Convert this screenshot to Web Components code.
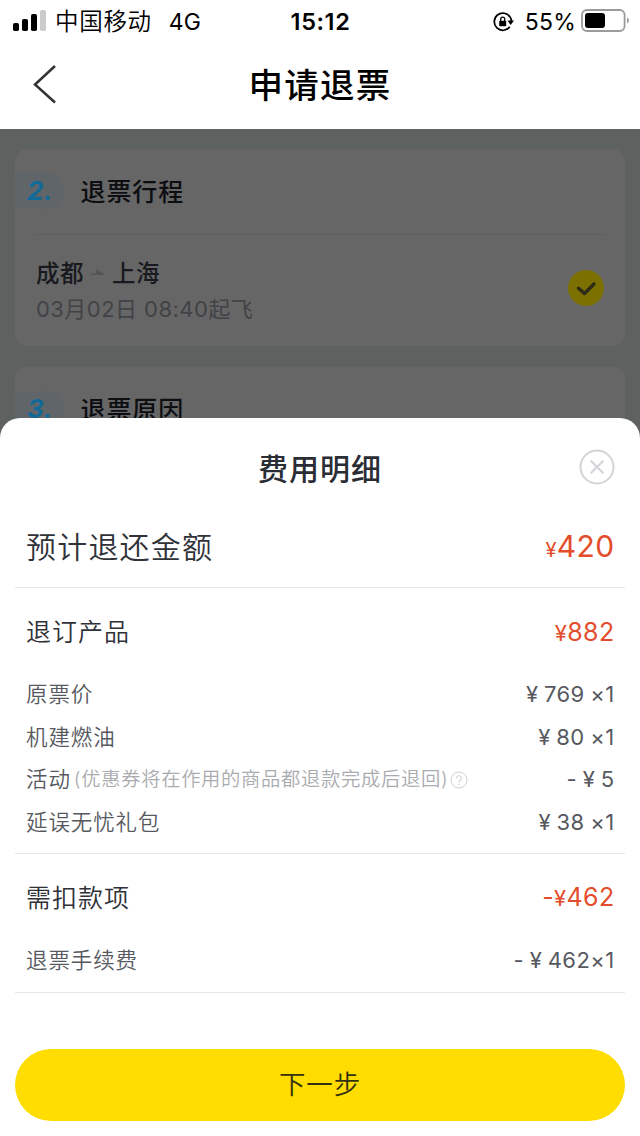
<!DOCTYPE html>
<html lang="zh-CN">
<head>
<meta charset="utf-8">
<meta name="viewport" content="width=device-width, initial-scale=1">
<title>申请退票</title>
<style>
html,body{margin:0;height:100%;overflow:hidden}
body{font-family:Inter,"Noto Sans CJK SC",sans-serif;background:#fff;color:#000}
</style>
</head>
<body>
<refund-app></refund-app>
<script>
const define=(name,css,html)=>customElements.define(name,class extends HTMLElement{
  constructor(){
    super();
    const t=document.createElement('template');
    t.innerHTML=`<style>*{box-sizing:border-box}:host{display:block;box-sizing:border-box;white-space:nowrap}${css}</style>${html}`;
    this.attachShadow({mode:'open'}).append(t.content.cloneNode(true));
  }
});

define('status-bar',`
:host{height:40px;display:grid;grid-template-columns:1fr auto 1fr;align-items:center;padding:1px 11px 0 13px;line-height:40px}
.l,.r{display:flex;align-items:center}
.r{justify-content:flex-end}
.c{font-size:23.5px;letter-spacing:.7px;font-weight:350;margin-top:1px}
.g{font-size:23px;margin-left:17px;letter-spacing:.2px}
.t{font-size:23.5px;font-weight:600;letter-spacing:.6px;margin-left:-1px}
.p{font-size:23px;letter-spacing:.25px;margin:0 5px 0 11px}
svg{display:block;flex:none}
.r svg{margin-top:-2px}`,`
<div class="l"><svg width="33" height="22" viewBox="0 0 33 22" style="margin:-2px 9px 0 0"><rect x="0" y="13" width="6" height="8" rx="1.8"/><rect x="9" y="9" width="6" height="12" rx="1.8"/><rect x="18" y="4" width="6" height="17" rx="1.8"/><rect x="27" y="0" width="6" height="21" rx="1.8" fill="#cbcbcb"/></svg><span class="c">中国移动</span><span class="g">4G</span></div>
<div class="t">15:12</div>
<div class="r"><svg width="21" height="20" viewBox="0 0 21 20" style="margin-top:0"><path d="M17.2 5.2A8.6 8.6 0 1 0 16.8 14.8" fill="none" stroke="#000" stroke-width="1.7"/><path d="M17.2 5.2Q18.4 7 18.4 9" fill="none" stroke="#000" stroke-width="1.7"/><path d="M14.4 8.6H21L17.7 13Z"/><rect x="6.2" y="8.8" width="7" height="5.4" rx=".8"/><path d="M7.7 9V7.2a2 2 0 0 1 4 0V9" fill="none" stroke="#000" stroke-width="1.3"/></svg><span class="p">55%</span><svg width="48" height="24" viewBox="0 0 48 24"><rect x="1" y="1" width="42.6" height="21" rx="5" fill="#fff" stroke="#9b9b9b" stroke-width="1.8"/><rect x="4" y="4" width="20" height="15" rx="3"/><path d="M46 8.5v6q2-.8 2-3t-2-3z" fill="#9b9b9b"/></svg></div>`);

define('nav-bar',`
:host{height:89px;display:grid;grid-template-columns:1fr auto 1fr;align-items:center;padding:0 32px}
svg{display:block;margin-top:-1px}
h1{margin:2px 0 0;font-size:34.5px;letter-spacing:1.3px;font-weight:500;line-height:48px}`,`
<svg width="25" height="40" viewBox="0 0 25 40"><path d="M23 2 3 20.5 23 38.5" fill="none" stroke="#333" stroke-width="2.5"/></svg><h1><slot></slot></h1>`);

define('step-card',`
:host{background:#666;border-radius:12px;margin:0 15px}
header{display:flex;align-items:center;height:85px}
.n{width:49px;height:36px;margin-top:-2px;border-radius:0 18px 18px 0;background:#60656a;color:#106a97;font-weight:700;font-style:italic;font-size:26px;line-height:35px;padding-left:12px;letter-spacing:.5px}
h2{margin:0 0 0 16.5px;font-size:25px;letter-spacing:.9px;font-weight:500;line-height:36px;color:#0c0e12}`,`
<header><span class="n"><slot name="number"></slot></span><h2><slot name="title"></slot></h2></header><slot></slot>`);

define('flight-trip',`
:host{margin:0 21px;padding-top:21px;border-top:1px solid #5d5e5f;height:112px;display:flex;justify-content:space-between}
.a{display:flex;align-items:center;height:31px;font-size:23.5px;letter-spacing:.5px;color:#181a20;font-weight:500}
.a svg{margin:1px 7px 0 6px}
.b{font-size:22px;letter-spacing:.45px;line-height:32px;margin-top:6px;color:#414347;font-weight:380}
.ok{margin-top:14px}
svg{display:block}`,`
<div><div class="a"><slot name="from"></slot><svg width="15" height="8" viewBox="0 0 15 8"><path d="M1 7V5.5H6V1L14 5.8V7Z" fill="#525456"/></svg><slot name="to"></slot></div><div class="b"><slot name="time"></slot></div></div>
<svg class="ok" width="36" height="36" viewBox="0 0 36 36"><circle cx="18" cy="18" r="18" fill="#7c7000"/><path d="m10.5 18.2 6 5.3L26 14" fill="none" stroke="#2e2b18" stroke-width="3.4" stroke-linecap="round" stroke-linejoin="round"/></svg>`);

define('fee-row',`
:host{display:flex;justify-content:space-between;align-items:center;height:42.6px;padding:0 11px;color:#57595f;font-size:21.5px;line-height:32px}
.label{letter-spacing:.9px;display:flex;align-items:center;font-weight:350}
.amount{font-size:22px;letter-spacing:.4px;word-spacing:-1px;margin-right:-.5px}
:host([head]){height:64px;font-size:25px;color:#303238}
:host([head]) .label{letter-spacing:1px}
:host([head]) .amount,:host([total]) .amount{color:#e34d2b;--yen:22px;font-size:inherit;letter-spacing:.35px}
:host([total]){height:80px;font-size:30px;color:#303238}
:host([total]) .label{letter-spacing:1.2px}
:host([total]) .amount{--yen:20px;margin-top:2px}`,`
<span class="label"><slot></slot></span><span class="amount"><slot name="amount"></slot></span>`);

define('yen-sign',`:host{display:inline;font-size:var(--yen)}`,`¥`);

define('fee-note',`
:host{display:flex;align-items:center;font-size:19.3px;letter-spacing:.7px;color:#a9abaf;margin-left:3px}
svg{display:block;margin:1px 0 0 2px}`,`
<span><slot></slot></span><svg width="18" height="18" viewBox="0 0 18 18" fill="none" stroke="#d0d1d3"><circle cx="9" cy="9" r="8"/><path d="M6.5 7.2a2.5 2.5 0 1 1 3.7 2.2Q9 10.1 9 11.3" stroke-width="1.1"/><path d="M9 12.7v1.2" stroke-width="1.2"/></svg>`);

define('fee-group',`
:host{margin:0 15px;border-bottom:1px solid #e6e6e7}`,`<slot></slot>`);

define('fee-sheet',`
:host{display:flex;flex-direction:column;background:#fff;border-radius:20px 20px 0 0}
header{display:grid;grid-template-columns:1fr auto 1fr;align-items:center;height:89px;padding:12px 26px 0}
h2{grid-column:2;margin:0;font-size:30px;letter-spacing:1px;font-weight:500;line-height:42px;color:#2b2d35}
svg{justify-self:end;display:block;margin:-4px -.5px 0 0}`,`
<header><h2><slot name="title"></slot></h2><svg width="36" height="36" viewBox="0 0 36 36" fill="none" stroke="#d4d4d8" stroke-width="2"><circle cx="18" cy="18" r="16.5"/><path d="m12.2 12.2 11.6 11.6m0-11.6L12.2 23.8" stroke-width="2.1" stroke-linecap="round"/></svg></header><slot></slot>`);

define('primary-button',`
:host{margin:56px 15px 0}
button{display:block;width:100%;height:72px;border:0;padding:0 0 2px;border-radius:36px;background:#fd0;color:#33300f;font:inherit;font-weight:350;font-size:26.5px;letter-spacing:.9px;line-height:70px}`,`<button><slot></slot></button>`);

define('refund-app',`
:host{width:640px;height:1136px;display:flex;flex-direction:column}
main{flex:1;position:relative;background:#5d615f;display:flex;flex-direction:column;gap:21px;padding-top:20px;overflow:hidden}
.first{height:197px}.second{height:200px}
fee-sheet{position:absolute;left:0;right:0;top:289px;bottom:0}`,`
<status-bar></status-bar>
<nav-bar>申请退票</nav-bar>
<main>
<step-card class="first"><span slot="number">2.</span><span slot="title">退票行程</span>
<flight-trip><span slot="from">成都</span><span slot="to">上海</span><span slot="time">03月02日 08:40起飞</span></flight-trip></step-card>
<step-card class="second"><span slot="number">3.</span><span slot="title">退票原因</span></step-card>
<fee-sheet><span slot="title">费用明细</span>
<fee-group><fee-row total>预计退还金额<span slot="amount"><yen-sign></yen-sign>420</span></fee-row></fee-group>
<fee-group style="padding:12px 0 9.6px"><fee-row head>退订产品<span slot="amount"><yen-sign></yen-sign>882</span></fee-row>
<div style="padding-top:9px">
<fee-row>原票价<span slot="amount">¥ 769 ×1</span></fee-row>
<fee-row>机建燃油<span slot="amount">¥ 80 ×1</span></fee-row>
<fee-row>活动<fee-note>(优惠券将在作用的商品都退款完成后退回)</fee-note><span slot="amount">- ¥ 5</span></fee-row>
<fee-row>延误无忧礼包<span slot="amount">¥ 38 ×1</span></fee-row></div></fee-group>
<fee-group style="padding:12px 0 10.4px"><fee-row head>需扣款项<span slot="amount">-<yen-sign></yen-sign>462</span></fee-row>
<div style="padding-top:9px"><fee-row>退票手续费<span slot="amount">- ¥ 462×1</span></fee-row></div></fee-group>
<primary-button>下一步</primary-button>
</fee-sheet>
</main>`);
</script>
</body>
</html>
